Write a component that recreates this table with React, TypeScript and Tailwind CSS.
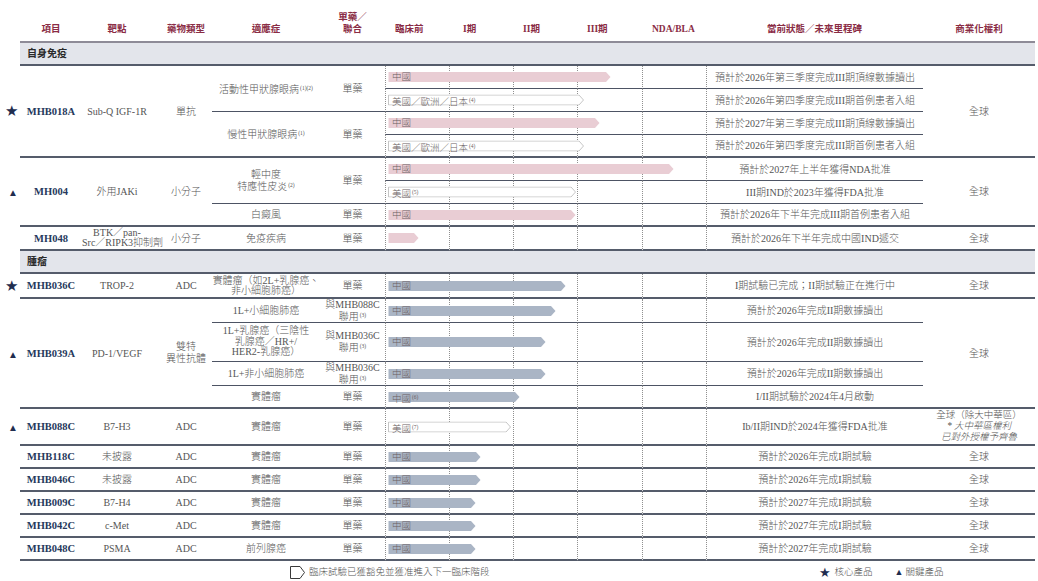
import React from 'react';

const font = "font-['Liberation_Serif','Noto_Sans_CJK_TC',serif]";
const dot = '[border-left:1px_dotted_#8f8f8f]';
const thin = '[border-bottom:1px_solid_#4d5464]';
const thick = '[border-bottom:2px_solid_#555c6b]';
const hd = 'p-0 pb-[6px] align-bottom text-center text-[9.5px] leading-[12px] font-semibold text-[#8a2c45] [border-bottom:2px_solid_#8e8b97]';
const hdPhase = 'p-0 pb-[6px] pl-[10px] align-bottom text-left text-[9.5px] leading-[12px] font-bold text-[#8a2c45] [border-bottom:2px_solid_#8e8b97]';

type BarProps = { w: number; kind: 'pink' | 'blue' | 'outline'; label?: string; sup?: string };

function Sup({ children }: { children: React.ReactNode }) {
  return <span className="ml-[1px] align-[3px] text-[5.5px]">{children}</span>;
}

function Bar({ w, kind, label, sup }: BarProps) {
  const fill = kind === 'pink' ? '#e9cdd4' : kind === 'blue' ? '#aab5c5' : '#ffffff';
  const stroke = kind === 'outline' ? '#c6c6c6' : 'none';
  return (
    <div className="absolute left-[2px] top-1/2 h-[11px] -translate-y-1/2" style={{ width: w }}>
      <svg className="absolute inset-0" width={w} height={11}>
        <polygon
          points={`0.5,0.5 ${w - 5},0.5 ${w - 0.5},5.5 ${w - 5},10.5 0.5,10.5`}
          fill={fill}
          stroke={stroke}
        />
      </svg>
      {label && (
        <span className="relative block whitespace-nowrap pl-[4px] text-left text-[9.5px] leading-[11px] text-[#6a5f62]">
          {label}
          {sup && <Sup>{sup}</Sup>}
        </span>
      )}
    </div>
  );
}

function Phases({ bar, b }: { bar?: BarProps; b: string }) {
  return (
    <>
      <td className={`relative p-0 ${dot} ${b}`}>{bar && <Bar {...bar} />}</td>
      {[0, 1, 2, 3].map((i) => (
        <td key={i} className={`p-0 ${dot} ${b}`} />
      ))}
    </>
  );
}

function Status({ text, b }: { text: string; b: string }) {
  return <td className={`whitespace-nowrap p-0 text-center ${dot} ${b}`}>{text}</td>;
}

function Mark({ type, rows }: { type?: 'star' | 'tri'; rows?: number }) {
  return (
    <td rowSpan={rows} className="p-0 pr-[2px] text-right font-['DejaVu_Sans',sans-serif] text-[#1f2d4f]">
      {type === 'star' && <span className="text-[15px]">★</span>}
      {type === 'tri' && <span className="text-[10px]">▲</span>}
    </td>
  );
}

function Name({ children, rows }: { children: React.ReactNode; rows?: number }) {
  return (
    <td rowSpan={rows} className={`p-0 text-center text-[10.5px] font-bold text-[#26395c] ${thick}`}>
      {children}
    </td>
  );
}

function C({
  children,
  rows,
  b = thick,
  cls = '',
}: {
  children?: React.ReactNode;
  rows?: number;
  b?: string;
  cls?: string;
}) {
  return (
    <td rowSpan={rows} className={`p-0 text-center ${b} ${cls}`}>
      {children}
    </td>
  );
}

function Group({ label }: { label: string }) {
  return (
    <tr className="h-[23px]">
      <td className="p-0" />
      <td colSpan={12} className={`bg-[#e3e5eb] p-0 pl-[7px] text-left font-bold text-[#2a2a2a] ${thick}`}>
        {label}
      </td>
    </tr>
  );
}

const simple = [
  { name: 'MHB118C', target: '未披露', ind: '實體瘤', w: 93, status: '預計於2026年完成I期試驗' },
  { name: 'MHB046C', target: '未披露', ind: '實體瘤', w: 93, status: '預計於2026年完成I期試驗' },
  { name: 'MHB009C', target: 'B7-H4', ind: '實體瘤', w: 88, status: '預計於2027年完成I期試驗' },
  { name: 'MHB042C', target: 'c-Met', ind: '實體瘤', w: 88, status: '預計於2027年完成I期試驗' },
  { name: 'MHB048C', target: 'PSMA', ind: '前列腺癌', w: 88, status: '預計於2027年完成I期試驗' },
];

export default function App() {
  return (
    <div className={`h-[581px] w-[1038px] overflow-hidden bg-white ${font} text-[10px] font-light leading-[11px] text-[#555]`}>
      <table className="w-[1035px] table-fixed border-separate border-spacing-0">
        <colgroup>
          <col className="w-[20px]" />
          <col className="w-[62px]" />
          <col className="w-[70px]" />
          <col className="w-[60px]" />
          <col className="w-[108px]" />
          <col className="w-[65px]" />
          <col className="w-[64px]" />
          <col className="w-[64px]" />
          <col className="w-[64px]" />
          <col className="w-[65px]" />
          <col className="w-[64px]" />
          <col className="w-[217px]" />
          <col className="w-[112px]" />
        </colgroup>
        <thead>
          <tr className="h-[43px]">
            <th className="p-0" />
            <th className={hd}>項目</th>
            <th className={hd}>靶點</th>
            <th className={`${hd} pl-[8px]`}>藥物類型</th>
            <th className={hd}>適應症</th>
            <th className={`${hd} leading-[10px]`}>
              單藥／
              <br />
              聯合
            </th>
            <th className={`${hdPhase} pl-[5px]`}>臨床前</th>
            <th className={`${hdPhase} pl-[14px]`}>I期</th>
            <th className={hdPhase}>II期</th>
            <th className={hdPhase}>III期</th>
            <th className={hdPhase}>NDA/BLA</th>
            <th className={hd}>當前狀態／未來里程碑</th>
            <th className={hd}>商業化權利</th>
          </tr>
        </thead>
        <tbody>
          <Group label="自身免疫" />

          {/* MHB018A */}
          <tr className="h-[23px]">
            <Mark type="star" rows={4} />
            <Name rows={4}>MHB018A</Name>
            <C rows={4}>Sub-Q IGF-1R</C>
            <C rows={4} cls="pl-[8px]">單抗</C>
            <C rows={2} b={thin}>
              活動性甲狀腺眼病<Sup>(1)(2)</Sup>
            </C>
            <C rows={2} b={thin}>單藥</C>
            <Phases b={thin} bar={{ w: 223, kind: 'pink', label: '中國' }} />
            <Status b={thin} text="預計於2026年第三季度完成III期頂線數據讀出" />
            <C rows={4}>全球</C>
          </tr>
          <tr className="h-[23px]">
            <Phases b={thin} bar={{ w: 196, kind: 'outline', label: '美國／歐洲／日本', sup: '(4)' }} />
            <Status b={thin} text="預計於2026年第四季度完成III期首例患者入組" />
          </tr>
          <tr className="h-[23px]">
            <C rows={2}>
              慢性甲狀腺眼病<Sup>(1)</Sup>
            </C>
            <C rows={2}>單藥</C>
            <Phases b={thin} bar={{ w: 212, kind: 'pink', label: '中國' }} />
            <Status b={thin} text="預計於2027年第三季度完成III期頂線數據讀出" />
          </tr>
          <tr className="h-[23px]">
            <Phases b={thick} bar={{ w: 196, kind: 'outline', label: '美國／歐洲／日本', sup: '(4)' }} />
            <Status b={thick} text="預計於2026年第四季度完成III期首例患者入組" />
          </tr>

          {/* MH004 */}
          <tr className="h-[23px]">
            <Mark type="tri" rows={3} />
            <Name rows={3}>MH004</Name>
            <C rows={3}>外用JAKi</C>
            <C rows={3} cls="pl-[8px]">小分子</C>
            <C rows={2} b={thin} cls="leading-[11px]">
              輕中度
              <br />
              特應性皮炎<Sup>(2)</Sup>
            </C>
            <C rows={2} b={thin}>單藥</C>
            <Phases b={thin} bar={{ w: 286, kind: 'pink', label: '中國' }} />
            <Status b={thin} text="預計於2027年上半年獲得NDA批准" />
            <C rows={3}>全球</C>
          </tr>
          <tr className="h-[23px]">
            <Phases b={thin} bar={{ w: 188, kind: 'outline', label: '美國', sup: '(5)' }} />
            <Status b={thin} text="III期IND於2023年獲得FDA批准" />
          </tr>
          <tr className="h-[23px]">
            <C>白癜風</C>
            <C>單藥</C>
            <Phases b={thick} bar={{ w: 188, kind: 'pink', label: '中國' }} />
            <Status b={thick} text="預計於2026年下半年完成III期首例患者入組" />
          </tr>

          {/* MH048 */}
          <tr className="h-[24px]">
            <Mark />
            <Name>MH048</Name>
            <C cls="leading-[10px] whitespace-nowrap">
              BTK／pan-
              <br />
              Src／RIPK3抑制劑
            </C>
            <C cls="pl-[8px]">小分子</C>
            <C>免疫疾病</C>
            <C>單藥</C>
            <Phases b={thick} bar={{ w: 31, kind: 'pink' }} />
            <Status b={thick} text="預計於2026年下半年完成中國IND遞交" />
            <C>全球</C>
          </tr>

          <Group label="腫瘤" />

          {/* MHB036C */}
          <tr className="h-[25px]">
            <Mark type="star" />
            <Name>MHB036C</Name>
            <C>TROP-2</C>
            <C cls="pl-[8px]">ADC</C>
            <C cls="leading-[10px] whitespace-nowrap">
              實體瘤（如2L+乳腺癌、
              <br />
              非小細胞肺癌）
            </C>
            <C>單藥</C>
            <Phases b={thick} bar={{ w: 178, kind: 'blue', label: '中國' }} />
            <Status b={thick} text="I期試驗已完成；II期試驗正在進行中" />
            <C>全球</C>
          </tr>

          {/* MHB039A */}
          <tr className="h-[24px]">
            <Mark type="tri" rows={4} />
            <Name rows={4}>MHB039A</Name>
            <C rows={4}>PD-1/VEGF</C>
            <C rows={4} cls="pl-[8px] leading-[12px]">
              雙特
              <br />
              異性抗體
            </C>
            <C b={thin}>1L+小細胞肺癌</C>
            <C b={thin} cls="leading-[10px]">
              與MHB088C
              <br />
              聯用<Sup>(3)</Sup>
            </C>
            <Phases b={thin} bar={{ w: 168, kind: 'blue', label: '中國' }} />
            <Status b={thin} text="預計於2026年完成II期數據讀出" />
            <C rows={4}>全球</C>
          </tr>
          <tr className="h-[39px]">
            <C b={thin} cls="leading-[10.5px] whitespace-nowrap">
              1L+乳腺癌（三陰性
              <br />
              乳腺癌／HR+/
              <br />
              HER2-乳腺癌）
            </C>
            <C b={thin} cls="leading-[10px]">
              與MHB036C
              <br />
              聯用<Sup>(3)</Sup>
            </C>
            <Phases b={thin} bar={{ w: 158, kind: 'blue', label: '中國' }} />
            <Status b={thin} text="預計於2026年完成II期數據讀出" />
          </tr>
          <tr className="h-[24px]">
            <C b={thin}>1L+非小細胞肺癌</C>
            <C b={thin} cls="leading-[10px]">
              與MHB036C
              <br />
              聯用<Sup>(3)</Sup>
            </C>
            <Phases b={thin} bar={{ w: 158, kind: 'blue', label: '中國' }} />
            <Status b={thin} text="預計於2026年完成II期數據讀出" />
          </tr>
          <tr className="h-[23px]">
            <C>實體瘤</C>
            <C>單藥</C>
            <Phases b={thick} bar={{ w: 132, kind: 'blue', label: '中國', sup: '(6)' }} />
            <Status b={thick} text="I/II期試驗於2024年4月啟動" />
          </tr>

          {/* MHB088C */}
          <tr className="h-[37px]">
            <Mark type="tri" />
            <Name>MHB088C</Name>
            <C>B7-H3</C>
            <C cls="pl-[8px]">ADC</C>
            <C>實體瘤</C>
            <C>單藥</C>
            <Phases b={thick} bar={{ w: 123, kind: 'outline', label: '美國', sup: '(7)' }} />
            <Status b={thick} text="Ib/II期IND於2024年獲得FDA批准" />
            <C cls="whitespace-nowrap text-[9.5px] leading-[11px]">
              全球（除大中華區）
              <br />
              <i>* 大中華區權利</i>
              <br />
              <i>已對外授權予齊魯</i>
            </C>
          </tr>

          {simple.map((r) => (
            <tr key={r.name} className="h-[23px]">
              <Mark />
              <Name>{r.name}</Name>
              <C>{r.target}</C>
              <C cls="pl-[8px]">ADC</C>
              <C>{r.ind}</C>
              <C>單藥</C>
              <Phases b={thick} bar={{ w: r.w, kind: 'blue', label: '中國' }} />
              <Status b={thick} text={r.status} />
              <C>全球</C>
            </tr>
          ))}
        </tbody>
      </table>

      <div className="mt-[3px] flex h-[16px] items-center text-[9.5px] text-[#555]">
        <div className="ml-[290px] flex items-center gap-[4px]">
          <svg width="15" height="13" viewBox="0 0 15 13">
            <polygon points="0.5,0.5 10,0.5 14.5,6.5 10,12.5 0.5,12.5" fill="#fff" stroke="#3a3a3a" />
          </svg>
          <span>臨床試驗已獲豁免並獲准進入下一臨床階段</span>
        </div>
        <div className="ml-[329px] flex items-center gap-[4px]">
          <span className="font-['DejaVu_Sans',sans-serif] text-[13px] text-[#1f2d4f]">★</span>
          <span>核心產品</span>
        </div>
        <div className="ml-[22px] flex items-center gap-[2px]">
          <span className="font-['DejaVu_Sans',sans-serif] text-[9px] text-[#1f2d4f]">▲</span>
          <span>關鍵產品</span>
        </div>
      </div>
    </div>
  );
}
